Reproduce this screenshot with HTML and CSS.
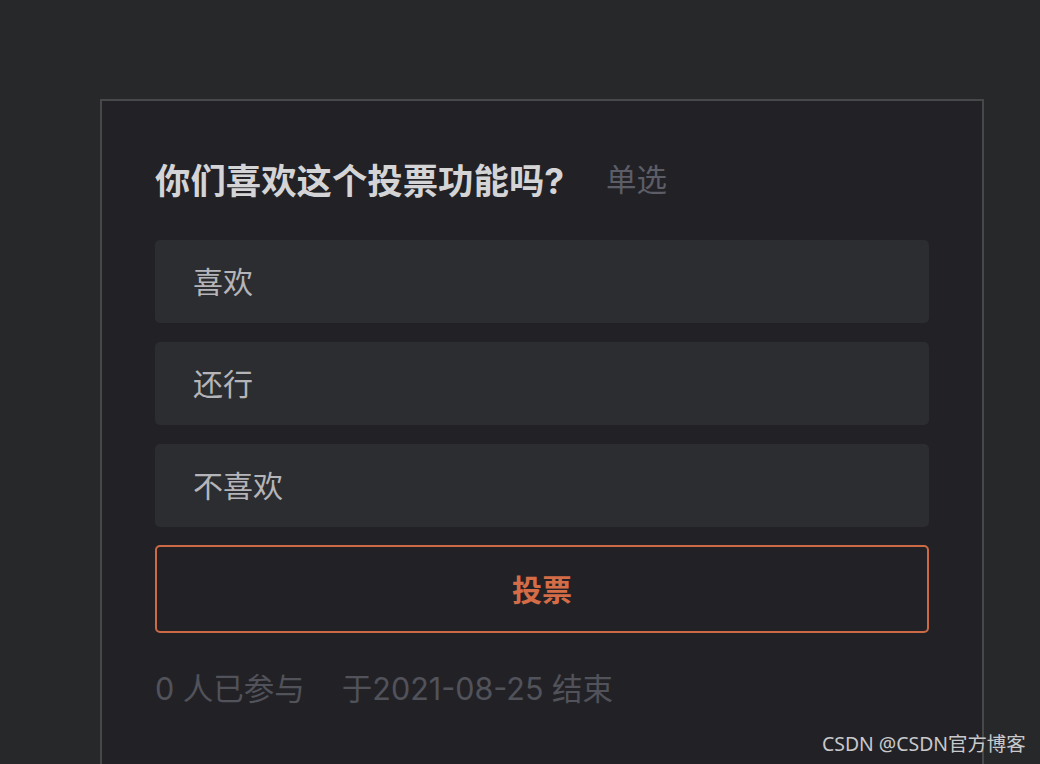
FILE: index.html
```html
<!DOCTYPE html>
<html lang="zh-CN">
<head>
<meta charset="utf-8">
<title>投票</title>
<link rel="stylesheet" href="styles.css">
</head>
<body>
<div class="page">
  <div class="card">
    <div class="title-row">
      <h2 class="title">你们喜欢这个投票功能吗?</h2>
      <span class="type">单选</span>
    </div>
    <div class="options">
      <div class="option">喜欢</div>
      <div class="option">还行</div>
      <div class="option">不喜欢</div>
    </div>
    <button class="vote">投票</button>
    <div class="meta">
      <span>0 人已参与</span>
      <span>于2021-08-25 结束</span>
    </div>
  </div>
</div>
<div class="watermark">CSDN @CSDN官方博客</div>
</body>
</html>
```
FILE: styles.css
```css
html, body {
  margin: 0;
  padding: 0;
  height: 100%;
  overflow: hidden;
  background: #27282a;
  font-family: Inter, "Noto Sans CJK SC", sans-serif;
}
.page {
  padding: 99px 0 0 100px;
}
.card {
  box-sizing: border-box;
  width: 884px;
  height: 665px;
  border: 2px solid #47484a;
  border-bottom: none;
  background: #222226;
  padding: 49px 53px 0 53px;
}
.title-row {
  display: flex;
  align-items: center;
  gap: 42px;
  height: 56px;
}
.title {
  margin: 0;
  font-size: 35.4px;
  font-weight: 700;
  color: #d4d4d6;
}
.type {
  font-size: 30.5px;
  color: #5c5d66;
}
.options {
  margin-top: 34px;
  display: flex;
  flex-direction: column;
  gap: 19px;
}
.option {
  box-sizing: border-box;
  height: 83px;
  border-radius: 5px;
  background: #2c2d30;
  color: #b5b5b9;
  font-size: 30px;
  display: flex;
  align-items: center;
  padding: 0 0 3px 38px;
}
.vote {
  display: block;
  box-sizing: border-box;
  width: 100%;
  height: 88px;
  margin-top: 18px;
  border: 2px solid #cd6a46;
  border-radius: 5px;
  background: transparent;
  color: #d46d47;
  font-family: inherit;
  font-size: 30px;
  font-weight: 700;
  padding: 0 0 3px 0;
}
.meta {
  margin-top: 36px;
  display: flex;
  gap: 37px;
  font-size: 30.5px;
  color: #51525a;
  line-height: 40px;
}
.watermark {
  position: absolute;
  left: 822px;
  top: 731px;
  font-family: "Noto Sans", "Noto Sans CJK SC", sans-serif;
  font-size: 19.4px;
  line-height: 26px;
  color: #c9c9cb;
}
```
